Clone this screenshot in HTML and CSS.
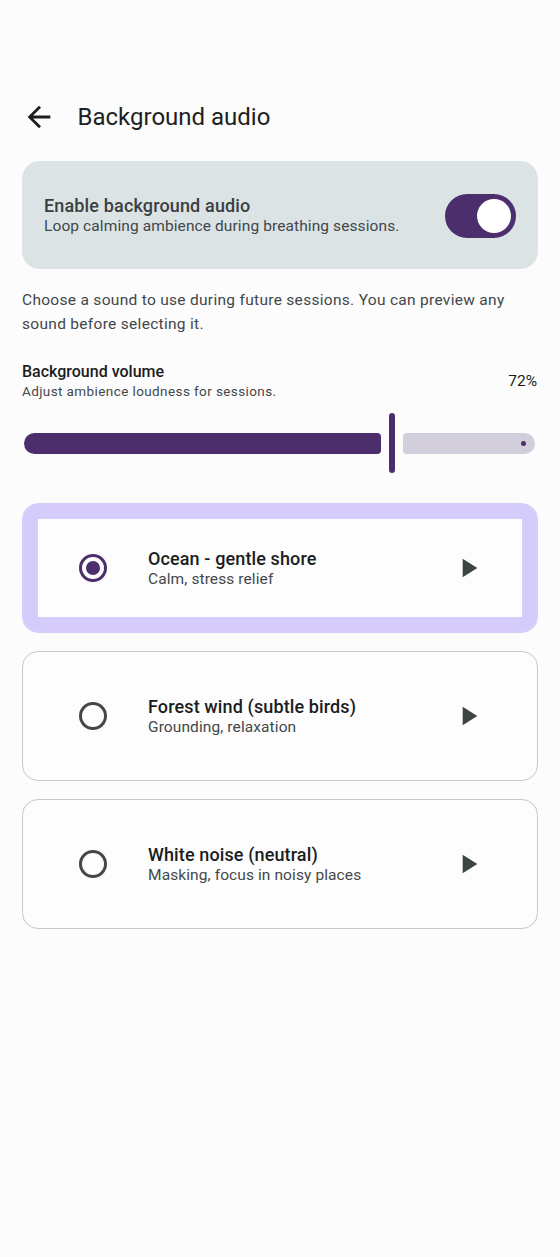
FILE: index.html
```html
<!DOCTYPE html>
<html lang="en">
<head>
<meta charset="utf-8">
<title>Background audio</title>
<link rel="stylesheet" href="styles.css">
</head>
<body>
<div class="screen">
  <header class="topbar">
    <svg class="back" viewBox="0 0 24 24" width="34" height="34"><path d="M20 11H7.83l5.59-5.59L12 4l-8 8 8 8 1.41-1.41L7.83 13H20v-2z" fill="#1c1b1f"/></svg>
    <h1 class="title">Background audio</h1>
  </header>

  <section class="enable-card">
    <div class="enable-text">
      <div class="enable-title">Enable background audio</div>
      <div class="enable-sub">Loop calming ambience during breathing sessions.</div>
    </div>
    <div class="switch"><div class="thumb"></div></div>
  </section>

  <p class="intro">Choose a sound to use during future sessions. You can preview any sound before selecting it.</p>

  <div class="volume-head">
    <div>
      <div class="volume-title">Background volume</div>
      <div class="volume-sub">Adjust ambience loudness for sessions.</div>
    </div>
    <div class="volume-value">72%</div>
  </div>

  <div class="slider">
    <div class="track-active"></div>
    <div class="handle"></div>
    <div class="track-rest"><span class="stop"></span></div>
  </div>

  <div class="options">
    <div class="option selected">
      <span class="radio on"><span class="dot"></span></span>
      <div class="option-text">
        <div class="option-title">Ocean - gentle shore</div>
        <div class="option-sub">Calm, stress relief</div>
      </div>
      <svg class="play" viewBox="0 0 24 24" width="32" height="32"><path d="M8 5v14l11-7z" fill="#3d4543"/></svg>
    </div>
    <div class="option">
      <span class="radio"></span>
      <div class="option-text">
        <div class="option-title">Forest wind (subtle birds)</div>
        <div class="option-sub">Grounding, relaxation</div>
      </div>
      <svg class="play" viewBox="0 0 24 24" width="32" height="32"><path d="M8 5v14l11-7z" fill="#3d4543"/></svg>
    </div>
    <div class="option">
      <span class="radio"></span>
      <div class="option-text">
        <div class="option-title">White noise (neutral)</div>
        <div class="option-sub">Masking, focus in noisy places</div>
      </div>
      <svg class="play" viewBox="0 0 24 24" width="32" height="32"><path d="M8 5v14l11-7z" fill="#3d4543"/></svg>
    </div>
  </div>
</div>
</body>
</html>
```

FILE: styles.css
```css
* { box-sizing: border-box; }
html, body { margin: 0; padding: 0; }
body {
  background: #fbfcfb;
  font-family: Roboto, "Noto Sans", sans-serif;
  color: #1b1c1e;
  width: 560px;
  min-height: 1257px;
}
.screen { padding: 85px 22px 0 22px; }

.topbar {
  display: flex;
  align-items: center;
  height: 64px;
  gap: 22px;
}
.back { display: block; margin-left: -0.5px; }
.title {
  margin: 0;
  font-size: 24px;
  font-weight: 400;
  color: #1f1f22;
}

.enable-card {
  margin-top: 12px;
  height: 108px;
  background: #dce3e5;
  border-radius: 18px;
  padding: 1px 22px 0 22px;
  display: flex;
  align-items: center;
  justify-content: space-between;
}
.enable-title { font-size: 18px; letter-spacing: 0.15px; font-weight: 500; color: #3a3f42; line-height: 21px; }
.enable-sub { font-size: 15.5px; letter-spacing: 0.1px; color: #41474a; line-height: 20px; }
.switch {
  width: 71px;
  height: 44px;
  border-radius: 22px;
  background: #4b2e6b;
  display: flex;
  align-items: center;
  justify-content: flex-end;
  padding-right: 5px;
}
.thumb { width: 34px; height: 34px; border-radius: 50%; background: #ffffff; }

.intro {
  margin: 19px 0 0 0;
  font-size: 15.5px;
  letter-spacing: 0.3px;
  line-height: 24px;
  color: #43474a;
}

.volume-head {
  margin-top: 26px;
  display: flex;
  align-items: center;
  justify-content: space-between;
}
.volume-title { font-size: 16px; font-weight: 500; color: #1b1c1e; line-height: 20px; }
.volume-sub { font-size: 13.5px; letter-spacing: 0.4px; color: #45484b; line-height: 18px; }
.volume-value { font-size: 15.5px; color: #1b1c1e; padding-right: 1px; }

.slider {
  margin-top: 13px;
  height: 60px;
  display: flex;
  align-items: center;
  padding: 0 3px 0 2px;
}
.track-active {
  width: 357px;
  height: 21px;
  background: #4b2e6b;
  border-radius: 11px 4px 4px 11px;
}
.handle {
  width: 6px;
  height: 60px;
  margin: 0 8px;
  border-radius: 3px;
  background: #4b2e6b;
}
.track-rest {
  flex: 1;
  height: 21px;
  background: #d3cedc;
  border-radius: 4px 11px 11px 4px;
  display: flex;
  align-items: center;
  justify-content: flex-end;
  padding-right: 9px;
}
.stop { width: 5px; height: 5px; border-radius: 50%; background: #4b2e6b; }

.options {
  margin-top: 30px;
  display: flex;
  flex-direction: column;
  gap: 18px;
}
.option {
  height: 130px;
  border: 1px solid #c9c6cd;
  border-radius: 16px;
  background: #fcfdfc;
  display: flex;
  align-items: center;
  padding: 0 53px 0 56px;
}
.option.selected {
  border-color: #d5ccfb;
  box-shadow: inset 0 0 0 15px #d5ccfb;
}
.radio {
  width: 28px;
  height: 28px;
  border-radius: 50%;
  border: 3px solid #47474a;
  display: flex;
  align-items: center;
  justify-content: center;
  flex: none;
}
.radio.on { border-color: #4b2e6b; }
.dot { width: 14px; height: 14px; border-radius: 50%; background: #4b2e6b; }
.option-text { margin-left: 41px; flex: 1; }
.option-title { font-size: 18px; letter-spacing: 0.12px; font-weight: 500; color: #1b1c1e; line-height: 22px; }
.option-sub { font-size: 15.5px; letter-spacing: 0.1px; color: #45484b; line-height: 19px; }
.play { display: block; flex: none; }
```
